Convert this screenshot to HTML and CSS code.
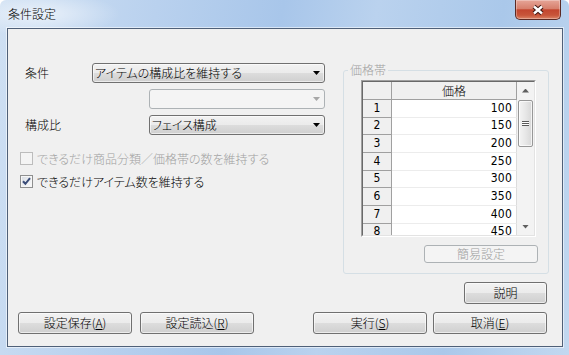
FILE: index.html
```html
<!DOCTYPE html>
<html lang="ja">
<head>
    <meta charset="UTF-8">
    <title>条件設定</title>
    <link rel="stylesheet" href="styles.css">
</head>
<body>
    <div class="window">
        <div class="titlebar">
            <span class="title">条件設定</span>
            <button class="close" type="button">
                <svg width="14" height="12" viewBox="0 0 14 12">
                    <path d="M3 2.5 L11 9.5 M11 2.5 L3 9.5" stroke="#3d1510" stroke-width="4.4" fill="none"/>
                    <path d="M3 2.5 L11 9.5 M11 2.5 L3 9.5" stroke="#fff" stroke-width="2.4" fill="none"/>
                </svg>
            </button>
        </div>

        <div class="client">
            <div class="main">
                <div class="form">
                    <div class="fields">
                        <span class="field-label">条件</span>
                        <div class="combo combo-wide">アイテムの構成比を維持する<span class="arrow"></span></div>
                        <div class="combo combo-sub combo-second disabled"><span class="arrow"></span></div>
                        <span class="field-label field-label-wide">構成比</span>
                        <div class="combo combo-sub combo-third">フェイス構成<span class="arrow"></span></div>
                    </div>

                    <div class="checks">
                        <div class="check disabled"><span class="box"></span>できるだけ商品分類／価格帯の数を維持する</div>
                        <div class="check">
                            <span class="box">
                                <svg width="11" height="11" viewBox="0 0 11 11">
                                    <path d="M2 5.2 L4.4 7.8 L9 2.2" stroke="#3a4c78" stroke-width="2" fill="none"/>
                                </svg>
                            </span>できるだけアイテム数を維持する
                        </div>
                    </div>
                </div>

                <fieldset class="group">
                    <legend>価格帯</legend>
                    <div class="group-body">
                        <div class="grid">
                            <div class="grid-inner">
                                <div class="grid-view">
                                    <table>
                                        <colgroup>
                                            <col class="col-head">
                                            <col class="col-value">
                                        </colgroup>
                                        <thead>
                                            <tr><th></th><th>価格</th></tr>
                                        </thead>
                                        <tbody>
                                            <tr><th>1</th><td>100</td></tr>
                                            <tr><th>2</th><td>150</td></tr>
                                            <tr><th>3</th><td>200</td></tr>
                                            <tr><th>4</th><td>250</td></tr>
                                            <tr><th>5</th><td>300</td></tr>
                                            <tr><th>6</th><td>350</td></tr>
                                            <tr><th>7</th><td>400</td></tr>
                                            <tr><th>8</th><td>450</td></tr>
                                        </tbody>
                                    </table>
                                </div>
                                <div class="vscroll">
                                    <div class="sb-button"><span class="sb-up"></span></div>
                                    <div class="sb-thumb"><span class="grip"></span></div>
                                    <div class="sb-track"></div>
                                    <div class="sb-button"><span class="sb-down"></span></div>
                                </div>
                            </div>
                        </div>
                        <div class="group-actions">
                            <button class="btn btn-small" type="button" disabled>簡易設定</button>
                        </div>
                    </div>
                </fieldset>
            </div>

            <div class="help-row">
                <button class="btn btn-help" type="button">説明</button>
            </div>

            <div class="button-row">
                <div class="button-group">
                    <button class="btn" type="button">設定保存(<u>A</u>)</button>
                    <button class="btn" type="button">設定読込(<u>R</u>)</button>
                </div>
                <div class="button-group button-group-right">
                    <button class="btn" type="button">実行(<u>S</u>)</button>
                    <button class="btn" type="button">取消(<u>E</u>)</button>
                </div>
            </div>
        </div>
    </div>
</body>
</html>
```

FILE: styles.css
```css
* {
    margin: 0;
    padding: 0;
    box-sizing: border-box;
}

body {
    font-family: "Noto Sans CJK JP", sans-serif;
    font-size: 12px;
    font-weight: 300;
    color: #000;
    background: #fff;
    font-feature-settings: "palt";
}

.window {
    width: 569px;
    height: 355px;
    display: flex;
    flex-direction: column;
    padding: 0 6px 8px 7px;
    border-radius: 6px 6px 0 0;
    background:
        radial-gradient(ellipse 80px 22px at 40px 14px, rgba(255,255,255,0.6), rgba(255,255,255,0) 100%),
        linear-gradient(100deg, #cfe0f3 0%, #b9d1ee 25%, #a8c6ea 45%, #bad2ee 60%, #aac8ea 80%, #c2d8f0 100%);
}

.titlebar {
    height: 28px;
    display: flex;
    justify-content: space-between;
    align-items: flex-start;
}

.title {
    padding-left: 1px;
    line-height: 28px;
    font-size: 12px;
}

.close {
    width: 46px;
    height: 20px;
    margin-right: 2px;
    display: flex;
    align-items: center;
    justify-content: center;
    border: 1px solid #5b2a24;
    border-top: none;
    border-radius: 0 0 5px 5px;
    background: linear-gradient(#e6a598 0%, #d7806d 45%, #c3462f 52%, #c8553a 80%, #dc8466 100%);
    box-shadow: inset 0 0 0 1px rgba(255,255,255,0.3);
}

.client {
    flex: 1;
    display: flex;
    flex-direction: column;
    padding: 33px 13px 12px 10px;
    background: #f0f0f0;
    border: 1px solid #4f6078;
    box-shadow: 0 0 0 1px rgba(255,255,255,0.55);
}

.main {
    height: 212px;
    display: flex;
    justify-content: space-between;
}

.form {
    padding-top: 1px;
    margin-left: 2px;
}

.fields {
    display: grid;
    grid-template-columns: 67px 57px 176px;
    grid-template-rows: 20px 20px 20px;
    row-gap: 6px;
    align-items: center;
    margin-left: 5px;
}

.field-label {
    line-height: 20px;
}

.field-label-wide {
    grid-column: 1 / 3;
    grid-row: 3;
}

.combo {
    height: 20px;
    display: flex;
    align-items: center;
    justify-content: space-between;
    padding: 0 4px 0 2px;
    border: 1px solid #707070;
    border-radius: 3px;
    background: linear-gradient(#f2f2f2 0%, #ebebeb 49%, #dddddd 50%, #cfcfcf 100%);
    box-shadow: inset 0 0 0 1px rgba(255,255,255,0.6);
    line-height: 18px;
    white-space: nowrap;
}

.combo-wide {
    grid-column: 2 / 4;
    grid-row: 1;
}

.combo-sub {
    grid-column: 3;
}

.combo-second {
    grid-row: 2;
}

.combo-third {
    grid-row: 3;
}

.arrow {
    width: 7px;
    height: 4px;
    margin-left: auto;
    background: #000;
    clip-path: polygon(0 0, 100% 0, 50% 100%);
}

.combo.disabled {
    border-color: #adb2b5;
    background: #f4f4f4;
    box-shadow: none;
}

.combo.disabled .arrow {
    background: #a7a7a7;
}

.checks {
    margin-top: 15px;
    display: flex;
    flex-direction: column;
    gap: 6px;
}

.check {
    height: 17px;
    display: flex;
    align-items: center;
    gap: 4px;
    white-space: nowrap;
}

.box {
    width: 13px;
    height: 13px;
    display: flex;
    align-items: center;
    justify-content: center;
    border: 1px solid #8e8f8f;
    background: linear-gradient(135deg, #d6dbe2 0%, #eef0f3 60%, #fbfbfb 100%);
    box-shadow: inset 0 0 0 1px #f6f6f6;
}

.check.disabled {
    color: #a0a0a0;
}

.check.disabled .box {
    border-color: #bcbcbc;
    background: #f4f4f4;
    box-shadow: none;
}

.group {
    width: 206px;
    min-width: 0;
    padding: 0;
    border: 1px solid #d5dfe5;
    border-radius: 3px;
}

.group legend {
    margin-left: 4px;
    padding: 0 2px;
    line-height: 16px;
    color: #a0a0a0;
}

.group-body {
    padding: 2px 12px 10px 17px;
}

.grid {
    width: 175px;
    height: 157px;
    border: 1px solid;
    border-color: #a0a0a0 #ffffff #ffffff #a0a0a0;
}

.grid-inner {
    height: 100%;
    display: flex;
    border: 1px solid;
    border-color: #696969 #e3e3e3 #e3e3e3 #696969;
    background: #fff;
}

.grid-view {
    width: 154px;
    overflow: hidden;
}

.grid table {
    width: 154px;
    table-layout: fixed;
    border-collapse: separate;
    border-spacing: 0;
}

.col-head {
    width: 29px;
}

.col-value {
    width: 125px;
}

.grid th,
.grid td {
    padding: 0;
    line-height: 15px;
    overflow: hidden;
}

.grid th {
    font-weight: 300;
    background: #f0f0f0;
    border-right: 1px solid #a0a0a0;
    border-bottom: 1px solid #a0a0a0;
}

.grid thead tr {
    height: 18px;
}

.grid tbody tr {
    height: 17.67px;
}

.grid tbody th,
.grid td {
    font-family: "Liberation Sans Narrow", "DejaVu Sans Condensed", sans-serif;
    font-size: 12px;
    font-weight: normal;
    letter-spacing: 0.2px;
}

.grid td {
    text-align: right;
    padding-right: 4px;
    border-right: 1px solid #dcdcdc;
    border-bottom: 1px solid #ececec;
}

.vscroll {
    width: 17px;
    display: flex;
    flex-direction: column;
    align-items: center;
    background: #f3f3f3;
}

.sb-button {
    width: 17px;
    height: 17px;
    display: flex;
    align-items: center;
    justify-content: center;
}

.sb-up,
.sb-down {
    width: 7px;
    height: 4px;
    background: #5f5f5f;
}

.sb-up {
    clip-path: polygon(50% 0, 100% 100%, 0 100%);
}

.sb-down {
    clip-path: polygon(0 0, 100% 0, 50% 100%);
}

.sb-thumb {
    width: 15px;
    height: 47px;
    margin-top: 1px;
    display: flex;
    align-items: center;
    justify-content: center;
    border: 1px solid #979797;
    border-radius: 2px;
    background: linear-gradient(to right, #f4f4f4 0%, #e7e7e7 50%, #d7d7d7 100%);
    box-shadow: inset 0 0 0 1px rgba(255,255,255,0.7);
}

.grip {
    width: 7px;
    height: 5px;
    border-top: 1px solid #5a5a5a;
    border-bottom: 1px solid #5a5a5a;
    background: linear-gradient(#fff 0 1px, #5a5a5a 1px 2px, #fff 2px 3px);
    background-size: 100% 3px;
    background-position: 0 0;
}

.sb-track {
    flex: 1;
}

.group-actions {
    display: flex;
    justify-content: flex-end;
    margin: 8px -2px 0 0;
}

.btn {
    width: 114px;
    height: 22px;
    font-family: inherit;
    font-size: 12px;
    font-weight: 300;
    font-feature-settings: "palt";
    line-height: 20px;
    color: #000;
    border: 1px solid #707070;
    border-radius: 3px;
    background: linear-gradient(#f2f2f2 0%, #ebebeb 49%, #dddddd 50%, #cfcfcf 100%);
    box-shadow: inset 0 0 0 1px rgba(255,255,255,0.6);
}

.btn u {
    text-decoration-thickness: 1px;
    text-underline-offset: 1px;
}

.btn:disabled {
    color: #a0a0a0;
    border-color: #adb2b5;
    background: #f4f4f4;
    box-shadow: none;
}

.btn-small {
    height: 18px;
    line-height: 16px;
}

.btn-help {
    width: 83px;
}

.help-row {
    margin-top: 8px;
    padding-right: 2px;
    display: flex;
    justify-content: flex-end;
}

.button-row {
    margin-top: 8px;
    padding-right: 2px;
    display: flex;
    justify-content: space-between;
}

.button-group {
    display: flex;
    gap: 8px;
}

.button-group-right {
    gap: 6px;
}
```
